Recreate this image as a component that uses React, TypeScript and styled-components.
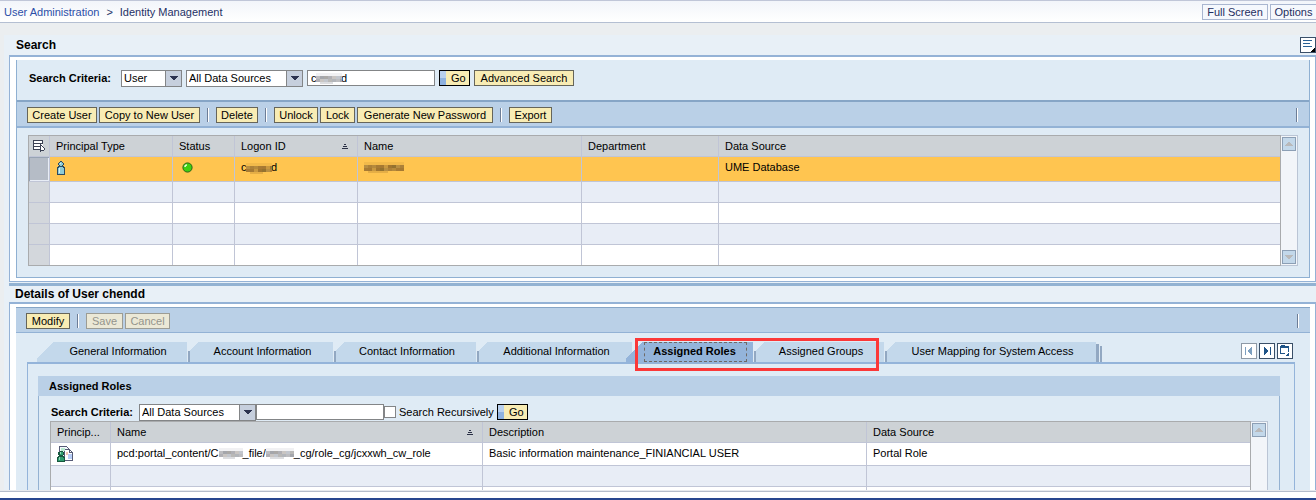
import React from "react";
import styled, { createGlobalStyle, css } from "styled-components";

const Global = createGlobalStyle`
  *, *::before, *::after { box-sizing: border-box; }
  body { margin: 0; background: #ebeef0; }
  body, button, input, select { font-family: "Liberation Sans", Arial, sans-serif; font-size: 11px; line-height: 14px; color: #000; }
`;

const Shell = styled.div`
  display: flex;
  flex-direction: column;
  height: 100vh;
  overflow: hidden;
`;

const TopBar = styled.header`
  flex: none;
  display: flex;
  align-items: center;
  justify-content: space-between;
  height: 23px;
  border-top: 1px solid #c0c6d8;
  border-bottom: 1px solid #b4bfd2;
  background: linear-gradient(#f2f5fa, #ffffff);
`;

const Crumbs = styled.nav`
  display: flex;
  gap: 7px;
  padding-left: 4px;
  color: #1f3166;
  a { color: #2c4fa8; text-decoration: none; }
`;

const TopActions = styled.div`
  display: flex;
  gap: 2px;
`;

const TopButton = styled.button<{ $cut?: boolean }>`
  width: ${(p) => (p.$cut ? 46 : 66)}px;
  height: 16px;
  padding: 0;
  border: 1px solid #a9b6d0;
  background: #f5f8fd;
  color: #1f2f60;
  line-height: 14px;
  white-space: nowrap;
  ${(p) => p.$cut && css`border-right: 0;`}
`;

const Main = styled.main`
  flex: 1;
  min-height: 0;
  overflow: hidden;
  margin: 12px 0 0 4px;
  padding-left: 5px;
  background: #e8f0f7;
`;

const Footer = styled.footer`
  flex: none;
  height: 10px;
  border-top: 1px solid #e6e9ee;
  border-bottom: 2px solid #27468f;
  background: linear-gradient(#b4bccb 1px, #ffffff 1px);
`;

const SectionHead = styled.div<{ $slim?: boolean }>`
  display: flex;
  align-items: center;
  justify-content: space-between;
  height: ${(p) => (p.$slim ? 16 : 20)}px;
  padding-left: ${(p) => (p.$slim ? 6 : 7)}px;
`;

const Title = styled.h2`
  margin: 0;
  font-size: 12px;
  line-height: 16px;
`;

const Panel = styled.section`
  padding: 3px 5px 3px 6px;
  border: 1px solid #94b2d6;
  border-top-width: 2px;
  background: #fff;
`;

const Inner = styled.div<{ $framed?: boolean }>`
  background: #dfebf5;
  ${(p) => p.$framed && css`border: solid #8fb0d2; border-width: 0 1px 1px;`}
`;

const Divider = styled.div`
  height: 3px;
  margin-top: 1px;
  background: #92b2d2;
`;

const SearchRow = styled.form<{ $compact?: boolean }>`
  display: flex;
  align-items: center;
  height: ${(p) => (p.$compact ? 16 : 36)}px;
  margin-bottom: ${(p) => (p.$compact ? 1 : 4)}px;
  padding-left: ${(p) => (p.$compact ? 1 : 12)}px;
  gap: ${(p) => (p.$compact ? 0 : 4)}px;
`;

const FieldLabel = styled.label<{ $wide?: boolean }>`
  width: 88px;
  font-weight: bold;
  white-space: nowrap;
`;

const SelectBox = styled.span<{ $width: number }>`
  display: flex;
  position: relative;
  flex: none;
  width: ${(p) => p.$width}px;
  height: 17px;
  svg { position: absolute; right: 4px; top: 6px; pointer-events: none; }
`;

const Select = styled.select`
  appearance: none;
  width: 100%;
  padding: 0 18px 0 2px;
  border: 1px solid #838587;
  border-radius: 0;
  background: linear-gradient(#838587, #838587) right 15px top / 1px 100% no-repeat,
    linear-gradient(#c6cfdd, #c6cfdd) right top / 15px 100% no-repeat, #fff;
`;

const TextInput = styled.input`
  width: 128px;
  height: 16px;
  padding: 0 3px;
  border: 1px solid #838587;
  border-radius: 0;
  background: #fff;
`;

const Masked = styled.span<{ $field?: boolean }>`
  position: relative;
  display: inline-flex;
  svg { position: absolute; left: ${(p) => (p.$field ? 9 : 5)}px; top: ${(p) => (p.$field ? 2 : 1)}px; }
`;

const InlineMosaic = styled.span`
  display: inline-block;
  height: 12px;
  vertical-align: top;
`;

const Button = styled.button<{ $width?: number }>`
  flex: none;
  height: 16px;
  width: ${(p) => (p.$width ? `${p.$width}px` : "auto")};
  padding: 0;
  border: 1px solid #66655a;
  background: #f8ecb4;
  line-height: 14px;
  white-space: nowrap;
  &:disabled { color: #94948c; border-color: #9c9c94; background: #ebe8d6; }
`;

const GoButton = styled(Button)`
  width: 31px;
  padding: 0 4px 0 11px;
  border-color: #000;
  background: linear-gradient(#b9d0ee 50%, #8fb2e0 50%) left top / 6px 100% no-repeat, #f8ecb4;
`;

const Check = styled.input`
  appearance: none;
  width: 12px;
  height: 12px;
  margin: 0 3px 0 0;
  border: 1px solid #838587;
  background: #fff;
  &:checked { background: #5a7fb0; }
`;

const CheckLabel = styled.label`
  display: flex;
  align-items: center;
  width: 113px;
  white-space: nowrap;
`;

const Toolbar = styled.div<{ $slim?: boolean }>`
  display: flex;
  align-items: center;
  gap: 2px;
  height: ${(p) => (p.$slim ? 26 : 28)}px;
  padding: 2px 11px 0 10px;
  border: solid #93b2d5;
  border-width: ${(p) => (p.$slim ? "1px 0" : "2px 0")};
  border-top-color: #86a5c6;
  background: #bad0e7;
`;

const Separator = styled.span<{ $end?: boolean }>`
  width: 2px;
  height: 14px;
  margin: 0 5px;
  border-left: 1px solid #6d7d96;
  border-right: 1px solid #fff;
  ${(p) => p.$end && css`margin: 0 0 0 auto;`}
`;

const GridArea = styled.div<{ $padded?: boolean }>`
  display: flex;
  ${(p) => p.$padded && css`padding: 7px 11px 11px;`}
`;

const Table = styled.table`
  flex: 1;
  width: 0;
  table-layout: fixed;
  border-collapse: separate;
  border-spacing: 0;
  border: 1px solid #a9abad;
  background: #fff;
`;

const Th = styled.th<{ $width?: number }>`
  ${(p) => p.$width && css`width: ${p.$width}px;`}
  height: 21px;
  padding: 0 6px;
  border-right: 1px solid #c0c5d6;
  border-bottom: 1px solid #c0c5d6;
  background: #cdd2d6;
  font-weight: normal;
  text-align: left;
  white-space: nowrap;
  &:last-child { border-right: 0; }
`;

const ThInner = styled.span`
  display: flex;
  align-items: center;
  justify-content: space-between;
  padding-right: 3px;
`;

const Td = styled.td<{ $kind?: "marker" | "markerOn" }>`
  padding: 0 6px 1px;
  border-right: 1px solid #c0c5d6;
  border-bottom: 1px solid #c0c5d6;
  white-space: nowrap;
  line-height: 13px;
  svg { display: block; }
  &:last-child { border-right: 0; }
  ${(p) => p.$kind && css`background: #d3d7dc;`}
  ${(p) => p.$kind === "markerOn" && css`background: #b5bcc6; box-shadow: inset 1px 1px #98a4b4, inset -1px -1px #e8edf6;`}
`;

const Row = styled.tr<{ $tone: "selected" | "plain" | "alt"; $height: number }>`
  height: ${(p) => p.$height}px;
  background: ${(p) => ({ selected: "#ffc550", plain: "#fff", alt: "#e8edf6" })[p.$tone]};
  ${Td} { ${(p) => p.$tone === "selected" && css`padding-bottom: 3px;`} }
  &:last-child td { border-bottom: 0; }
`;

const IconInset = styled.div<{ $by: number }>`
  padding-left: ${(p) => p.$by}px;
`;

const HeadIcon = styled.div`
  display: flex;
  margin: 0 -2px;
`;

const ScrollTrack = styled.div`
  display: flex;
  flex-direction: column;
  justify-content: space-between;
  width: 17px;
  padding: 1px;
  border: solid #bac5d5;
  border-width: 1px 1px 1px 0;
  background: #f2f5f9;
`;

const ScrollButton = styled.button`
  display: grid;
  place-items: center;
  width: 14px;
  height: 14px;
  padding: 0;
  border: 1px solid #8c9fb5;
  background: #c3d8ea;
`;

const TabArea = styled.div`
  padding: 9px 15px 0 11px;
`;

const TabRow = styled.div`
  display: flex;
  align-items: flex-end;
  height: 20px;
  padding-left: 10px;
`;

const Tab = styled.button<{ $width: number; $first?: boolean; $active?: boolean }>`
  position: relative;
  width: ${(p) => p.$width}px;
  height: 20px;
  padding: 0 0 2px ${(p) => (p.$active ? 10 : p.$first ? 12 : 2)}px;
  margin-left: ${(p) => (p.$active ? "-6px" : "0")};
  border: 0;
  background: ${(p) =>
    p.$active
      ? "linear-gradient(135deg, transparent 12px, #94b4da 12px)"
      : `linear-gradient(135deg, transparent ${p.$first ? 12 : 6}px, #c3d8eb ${p.$first ? 12 : 6}px)`};
  font-weight: ${(p) => (p.$active ? "bold" : "normal")};
  white-space: nowrap;
  ${(p) => p.$active && css`
    &::after { content: ""; position: absolute; inset: 0 6px 0 18px; border: 1px dashed #6f6a66; }
  `}
`;

const TabEdge = styled.i<{ $width?: number; $height?: number }>`
  flex: none;
  width: ${(p) => p.$width ?? 2}px;
  height: ${(p) => p.$height ?? 11}px;
  margin-left: ${(p) => (p.$height ? 0 : 1)}px;
  margin-right: ${(p) => (p.$height ? 1 : 0)}px;
  background: #92a8c2;
`;

const Highlight = styled.div`
  display: flex;
  align-items: flex-end;
  position: relative;
  &::after {
    content: "";
    position: absolute;
    inset: -4px 5px -9px 3px;
    border: 3px solid #fb3838;
    pointer-events: none;
  }
`;

const TabTools = styled.div`
  display: flex;
  gap: 2px;
  margin: 0 2px 3px auto;
`;

const IconButton = styled.button<{ $tone?: string }>`
  display: grid;
  place-items: center;
  width: 16px;
  height: 16px;
  padding: 0;
  border: 1px solid ${(p) => p.$tone ?? "#3a4f68"};
  background: #fff;
  svg { display: block; }
`;

const TabBody = styled.div`
  padding: 12px 14px 0 10px;
  border: 1px solid #94b4da;
  border-top-width: 2px;
  background: #dfebf5;
`;

const GroupTitle = styled.h3`
  margin: 0;
  padding: 3px 11px;
  background: #bad0e7;
  font-size: 11px;
  line-height: 14px;
`;

const GroupBody = styled.div`
  padding: 8px 11px 11px;
  border: solid #94b2d2;
  border-width: 0 1px 1px;
`;

const greyTones = ["#bdbdc0", "#b0b0b5", "#b9b8b6", "#a4a6ab", "#c9c5c2", "#b2b5ba", "#aaa8a6", "#c2c6cd"];
const goldTones = ["#b98f42", "#a87b34", "#a1752f", "#ad8138", "#a67932", "#94722f", "#b68a3c", "#c9983f"];

function Mosaic({ width, gold }: { width: number; gold?: boolean }) {
  const tones = gold ? goldTones : greyTones;
  const columns = Math.ceil(width / 4);
  return (
    <svg width={width} height="13" shapeRendering="crispEdges" aria-hidden="true">
      <rect width={width} height="4" y="1" fill={gold ? "#f2ba4b" : "#f1f1f3"} />
      {[4, 7].flatMap((y, r) =>
        Array.from({ length: columns }, (_, i) => (
          <rect key={`${y}-${i}`} x={i * 4} y={y} width="4" height="3" fill={tones[(i * 3 + r) % tones.length]} />
        ))
      )}
      <rect x="4" y="10" width={width / 2} height="2" fill={gold ? "#e5ae46" : "#dcdde0"} />
    </svg>
  );
}

function DropArrow() {
  return (
    <svg width="8" height="5" shapeRendering="crispEdges" aria-hidden="true">
      <path d="M0 0h8v1h-1v1h-1v1h-1v1h-2v-1h-1v-1h-1v-1h-1z" fill="#2c3350" />
    </svg>
  );
}

function Triangle({ down }: { down?: boolean }) {
  return (
    <svg width="8" height="4" shapeRendering="crispEdges" aria-hidden="true">
      <path
        d={down ? "M0 0h8v1h-1v1h-1v1h-1v1h-2v-1h-1v-1h-1v-1h-1z" : "M3 0h2v1h1v1h1v1h1v1h-8v-1h1v-1h1v-1h1z"}
        fill="#b9b9ba"
      />
    </svg>
  );
}

function SortIcon() {
  return (
    <svg width="6" height="6" shapeRendering="crispEdges" aria-hidden="true">
      <path d="M2 1h2v1h-2zM1 3h4v1h-4zM0 5h6v1h-6z" fill="#2b3146" />
    </svg>
  );
}

function SelectAllIcon() {
  return (
    <svg width="12" height="12" viewBox="0 0 12 12" shapeRendering="crispEdges" aria-hidden="true">
      <path d="M0 0h10v10h-10z" fill="#fff" />
      <path
        d="M0 0h10v1h-10zM0 3h10v1h-10zM0 6h7v1h-7zM0 9h7v1h-7zM0 0h1v10h-1zM9 0h1v4h-1zM7 4h1v8h-1zM8 5h1v1h-1zM9 6h1v1h-1zM10 7h1v1h-1zM11 8h1v2h-1zM8 10h3v1h-3z"
        fill="#3c4254"
      />
      <path d="M8 6h1v4h-1zM9 7h1v3h-1zM10 8h1v2h-1z" fill="#fff" />
    </svg>
  );
}

function UserIcon() {
  return (
    <svg width="8" height="14" viewBox="0 0 8 14" shapeRendering="crispEdges" aria-hidden="true">
      <path d="M3 0h2v1h1v1h1v2h-1v1h1v1h1v8h-8v-8h1v-1h1v-1h-1v-2h1v-1h1z" fill="#2b4a60" />
      <path d="M3 1h2v1h1v2h-1v1h-2v-1h-1v-2h1zM2 6h4v1h1v6h-6v-6h1z" fill="#8fcbd4" />
      <path d="M3 2h1v1h-1zM2 7h1v5h-1z" fill="#d5f0f2" />
    </svg>
  );
}

function StatusIcon() {
  return (
    <svg width="11" height="11" viewBox="0 0 11 11" aria-hidden="true">
      <circle cx="5.500" cy="5.500" r="4.600" fill="#3fd010" stroke="#27631a" />
      <path d="M3 5a2 2 0 0 1 2-2" stroke="#e2ffd8" strokeWidth="1.500" fill="none" />
    </svg>
  );
}

function RoleIcon() {
  return (
    <svg width="17" height="16" viewBox="0 0 17 16" shapeRendering="crispEdges" aria-hidden="true">
      <path d="M2.500 .5h7l2 2v10h-9z" fill="#f5f8fc" stroke="#565b76" />
      <path d="M7.500 3.500h5l3 3v8h-8z" fill="#fff" stroke="#565b76" />
      <path d="M12.500 3.500v3h3" fill="none" stroke="#565b76" />
      <path d="M9 6h2v3h-2z" fill="#f3c7b2" />
      <path d="M11 8h4v5h-4z" fill="#b7cdf5" />
      <path d="M4 2h4v3h-4z" fill="#b8ead0" />
      <path d="M3 5h3v1h1v3h-1v1h1v1h1v5h-8v-5h1v-1h1v-1h-1v-3h1z" fill="#17583e" />
      <path d="M3 6h3v3h-3zM2 11h4v1h1v3h-6v-3h1z" fill="#2f9c6e" />
      <path d="M3 6h1v2h-1zM2 11h1v3h-1z" fill="#8fdcb8" />
    </svg>
  );
}

function MenuIcon() {
  return (
    <svg width="14" height="14" viewBox="0 0 14 14" shapeRendering="crispEdges" aria-hidden="true">
      <path d="M2 2h9v1h-9zM2 5h7v1h-7zM2 8h9v1h-9z" fill="#2a6296" />
      <path d="M14 10v4h-4v-1h1v-1h1v-1h1v-1z" fill="#000" />
    </svg>
  );
}

function StepIcon({ forward, colour }: { forward?: boolean; colour: string }) {
  return (
    <svg width="14" height="14" viewBox="0 0 14 14" shapeRendering="crispEdges" aria-hidden="true">
      {forward ? (
        <path d="M4 3h1v1h1v1h1v1h1v2h-1v1h-1v1h-1v1h-1zM10 3h1v8h-1z" fill={colour} />
      ) : (
        <path d="M3 3h1v8h-1zM10 3v8h-1v-1h-1v-1h-1v-1h-1v-2h1v-1h1v-1h1v-1z" fill={colour} />
      )}
    </svg>
  );
}

function FolderIcon() {
  return (
    <svg width="14" height="14" viewBox="0 0 14 14" shapeRendering="crispEdges" aria-hidden="true">
      <path d="M3 1h4v1h4v6h-1v-4h-7v5h4v1h-5v-8h1z" fill="#1f5488" />
      <path d="M11 9v3h-3v-1h1v-1h1v-1z" fill="#1f5488" />
    </svg>
  );
}

function Scrollbar() {
  return (
    <ScrollTrack>
      <ScrollButton disabled aria-label="Scroll up"><Triangle /></ScrollButton>
      <ScrollButton disabled aria-label="Scroll down"><Triangle down /></ScrollButton>
    </ScrollTrack>
  );
}

function SourceSelect({ id, width, label }: { id?: string; width: number; label?: string }) {
  return (
    <SelectBox $width={width}>
      <Select id={id} aria-label={label}><option>All Data Sources</option></Select>
      <DropArrow />
    </SelectBox>
  );
}

const fillerRows = ["alt", "plain", "alt", "plain"] as const;

function Principals() {
  return (
    <GridArea $padded>
      <Table>
        <thead>
          <tr>
            <Th $width={21}><HeadIcon><SelectAllIcon /></HeadIcon></Th>
            <Th $width={123}>Principal Type</Th>
            <Th $width={62}>Status</Th>
            <Th $width={123}><ThInner>Logon ID<SortIcon /></ThInner></Th>
            <Th $width={224}>Name</Th>
            <Th $width={137}>Department</Th>
            <Th>Data Source</Th>
          </tr>
        </thead>
        <tbody>
          <Row $tone="selected" $height={25}>
            <Td $kind="markerOn" />
            <Td><IconInset $by={1}><UserIcon /></IconInset></Td>
            <Td><IconInset $by={3}><StatusIcon /></IconInset></Td>
            <Td><Masked>chendd<Mosaic width={26} gold /></Masked></Td>
            <Td><InlineMosaic><Mosaic width={40} gold /></InlineMosaic></Td>
            <Td />
            <Td>UME Database</Td>
          </Row>
          {fillerRows.map((tone, i) => (
            <Row key={i} $tone={tone} $height={i === 3 ? 20 : 21}>
              <Td $kind="marker" /><Td /><Td /><Td /><Td /><Td /><Td />
            </Row>
          ))}
        </tbody>
      </Table>
      <Scrollbar />
    </GridArea>
  );
}

function Roles() {
  return (
    <GridArea>
      <Table>
        <thead>
          <tr>
            <Th $width={60}>Princip...</Th>
            <Th $width={372}><ThInner>Name<SortIcon /></ThInner></Th>
            <Th $width={384}>Description</Th>
            <Th>Data Source</Th>
          </tr>
        </thead>
        <tbody>
          <Row $tone="plain" $height={23}>
            <Td><RoleIcon /></Td>
            <Td>
              pcd:portal_content/C<InlineMosaic><Mosaic width={24} /></InlineMosaic>_file/
              <InlineMosaic><Mosaic width={28} /></InlineMosaic>_cg/role_cg/jcxxwh_cw_role
            </Td>
            <Td>Basic information maintenance_FINIANCIAL USER</Td>
            <Td>Portal Role</Td>
          </Row>
          {fillerRows.map((tone, i) => (
            <Row key={i} $tone={tone} $height={21}>
              <Td /><Td /><Td /><Td />
            </Row>
          ))}
        </tbody>
      </Table>
      <Scrollbar />
    </GridArea>
  );
}

export default function App() {
  return (
    <Shell>
      <Global />
      <TopBar>
        <Crumbs>
          <a href="#administration">User Administration</a>
          <span>&gt;</span>
          <span>Identity Management</span>
        </Crumbs>
        <TopActions>
          <TopButton>Full Screen</TopButton>
          <TopButton $cut>Options</TopButton>
        </TopActions>
      </TopBar>
      <Main>
        <SectionHead>
          <Title>Search</Title>
          <IconButton aria-label="Panel menu"><MenuIcon /></IconButton>
        </SectionHead>
        <Panel>
          <Inner $framed>
            <SearchRow onSubmit={(e) => e.preventDefault()}>
              <FieldLabel htmlFor="kind">Search Criteria:</FieldLabel>
              <SelectBox $width={61}>
                <Select id="kind"><option>User</option></Select>
                <DropArrow />
              </SelectBox>
              <SourceSelect width={117} label="Data source" />
              <Masked $field>
                <TextInput aria-label="Search text" defaultValue="chendd" />
                <Mosaic width={26} />
              </Masked>
              <GoButton>Go</GoButton>
              <Button type="button" $width={100}>Advanced Search</Button>
            </SearchRow>
            <Toolbar>
              <Button $width={70}>Create User</Button>
              <Button $width={101}>Copy to New User</Button>
              <Separator />
              <Button $width={42}>Delete</Button>
              <Separator />
              <Button $width={44}>Unlock</Button>
              <Button $width={35}>Lock</Button>
              <Button $width={136}>Generate New Password</Button>
              <Separator />
              <Button $width={43}>Export</Button>
              <Separator $end />
            </Toolbar>
            <Principals />
          </Inner>
        </Panel>
        <Divider />
        <SectionHead $slim>
          <Title>Details of User chendd</Title>
        </SectionHead>
        <Panel>
          <Inner>
            <Toolbar $slim>
              <Button $width={44}>Modify</Button>
              <Separator />
              <Button disabled $width={37}>Save</Button>
              <Button disabled $width={45}>Cancel</Button>
              <Separator $end />
            </Toolbar>
            <TabArea>
              <TabRow role="tablist">
                <Tab role="tab" $width={150} $first>General Information</Tab>
                <TabEdge />
                <Tab role="tab" $width={143}>Account Information</Tab>
                <TabEdge />
                <Tab role="tab" $width={140}>Contact Information</Tab>
                <TabEdge />
                <Tab role="tab" $width={153}>Additional Information</Tab>
                <Highlight>
                  <Tab role="tab" $width={127} $active aria-selected>Assigned Roles</Tab>
                  <TabEdge />
                  <Tab role="tab" $width={128}>Assigned Groups</Tab>
                </Highlight>
                <TabEdge />
                <Tab role="tab" $width={209}>User Mapping for System Access</Tab>
                <TabEdge $width={3} $height={18} />
                <TabEdge $height={16} />
                <TabTools>
                  <IconButton $tone="#8d99a6" disabled aria-label="First tab"><StepIcon colour="#7da0c0" /></IconButton>
                  <IconButton aria-label="Last tab"><StepIcon forward colour="#1f5488" /></IconButton>
                  <IconButton aria-label="Tab list"><FolderIcon /></IconButton>
                </TabTools>
              </TabRow>
              <TabBody>
                <GroupTitle>Assigned Roles</GroupTitle>
                <GroupBody>
                  <SearchRow $compact onSubmit={(e) => e.preventDefault()}>
                    <FieldLabel htmlFor="source">Search Criteria:</FieldLabel>
                    <SourceSelect id="source" width={117} />
                    <TextInput aria-label="Role search text" />
                    <CheckLabel><Check type="checkbox" />Search Recursively</CheckLabel>
                    <GoButton>Go</GoButton>
                  </SearchRow>
                  <Roles />
                </GroupBody>
              </TabBody>
            </TabArea>
          </Inner>
        </Panel>
      </Main>
      <Footer />
    </Shell>
  );
}
